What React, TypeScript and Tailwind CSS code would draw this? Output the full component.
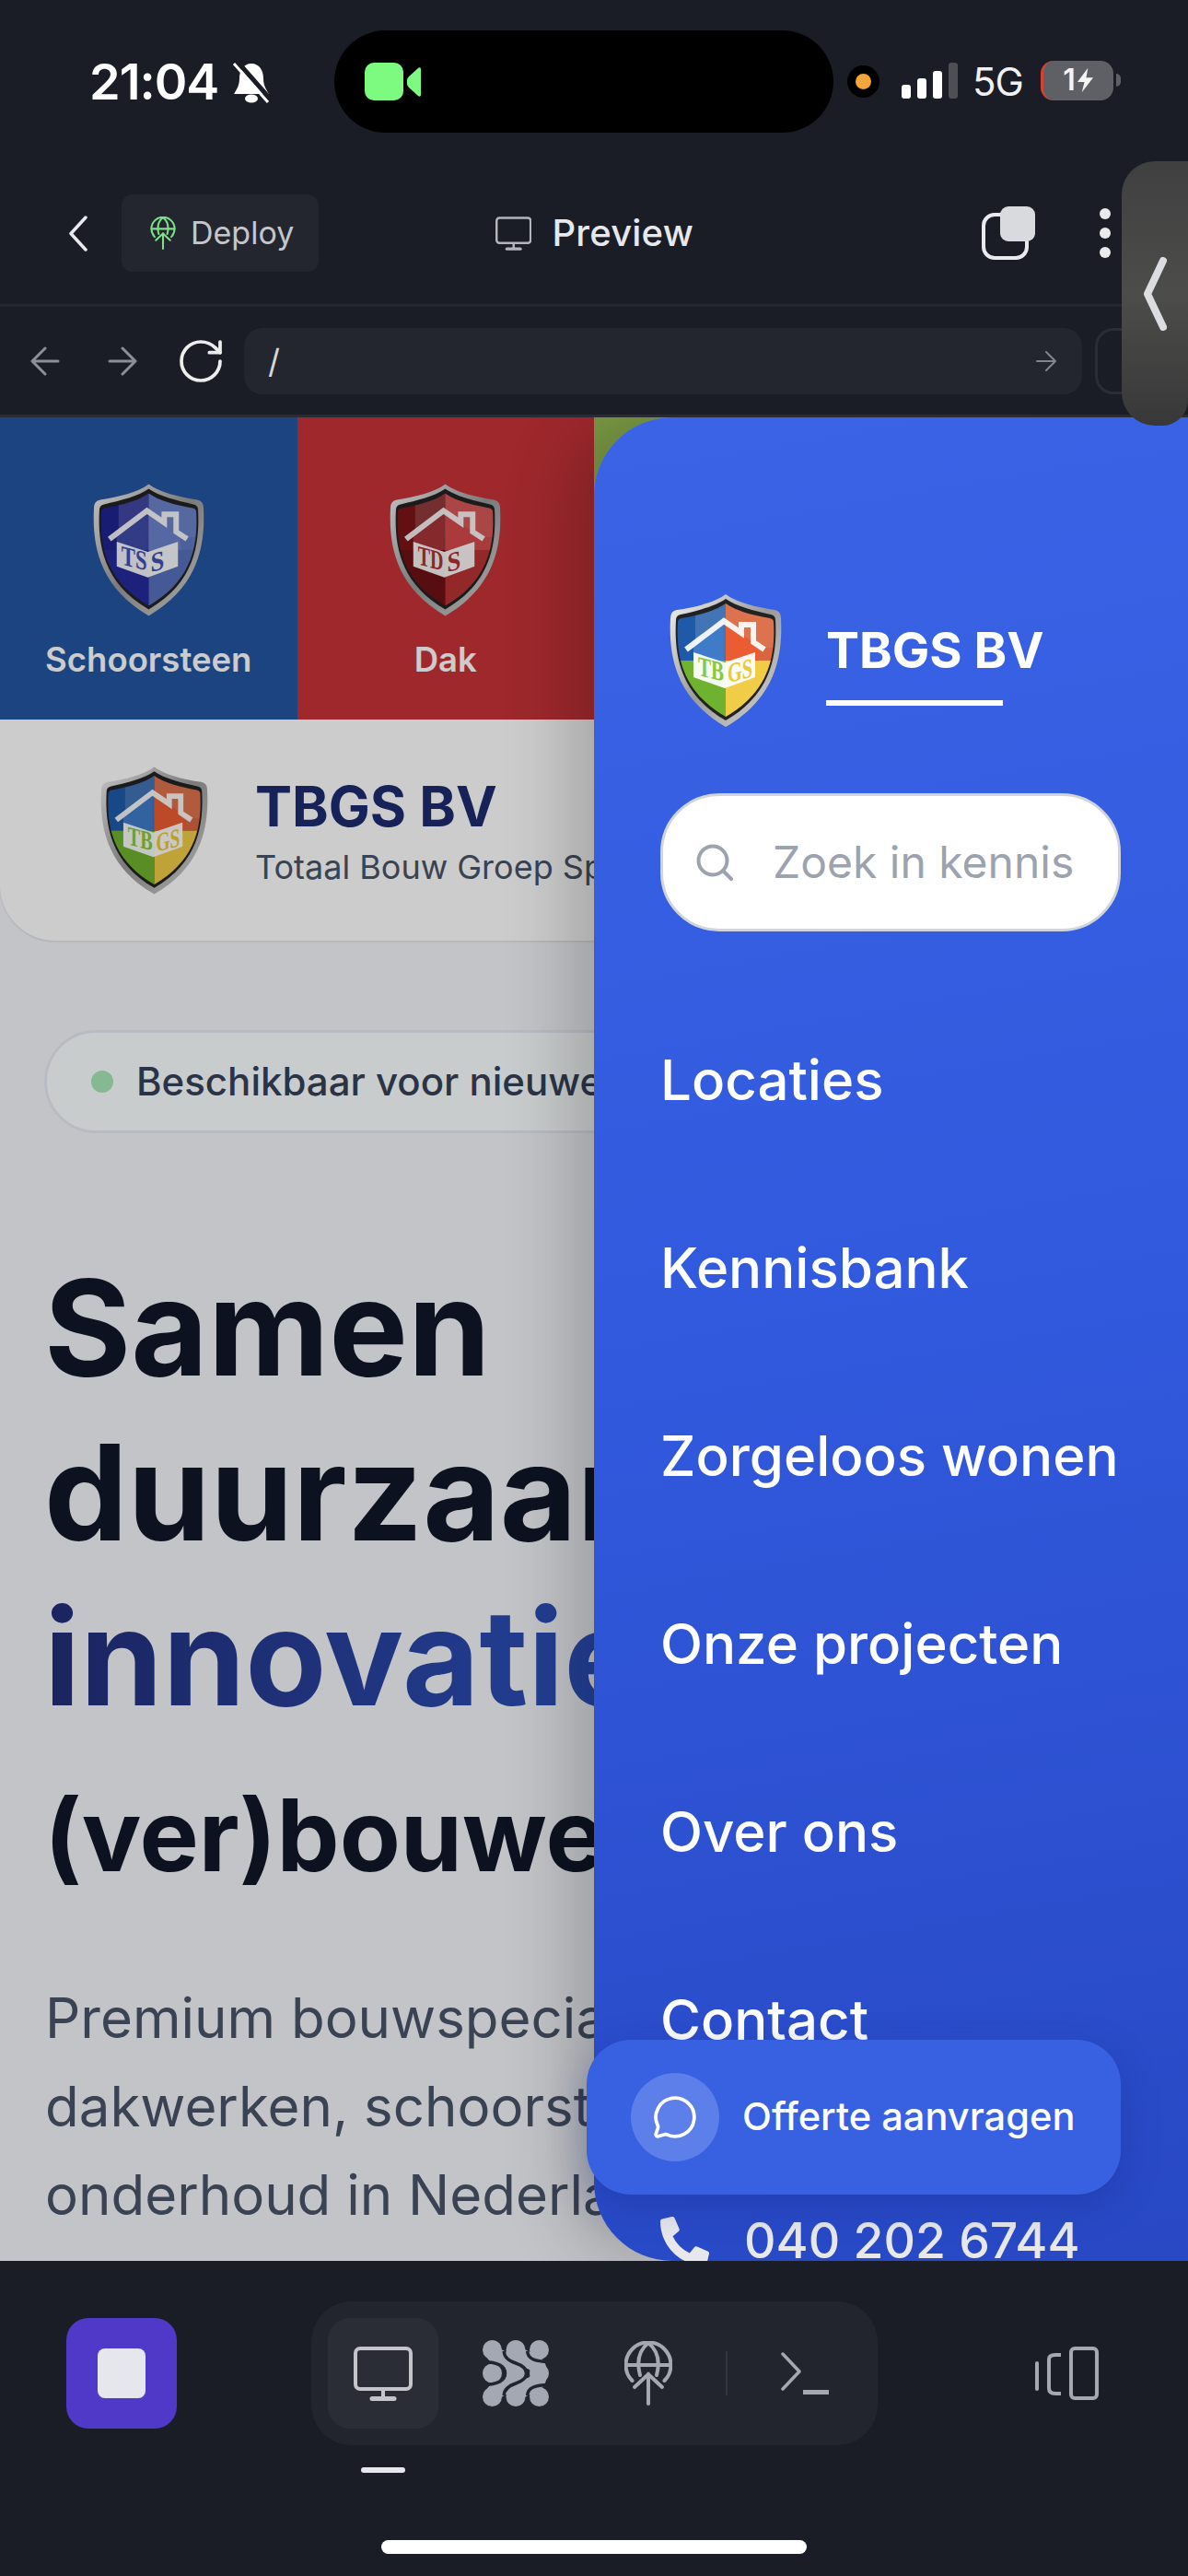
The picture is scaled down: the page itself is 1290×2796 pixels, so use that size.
import { MessageCircle, RotateCw } from 'lucide-react'
import { FaPhoneAlt } from 'react-icons/fa'

type ShieldProps = {
  id: string
  label: string
  tl: string
  tr: string
  bl: string
  br: string
  houseL: string
  houseR: string
  textL: string
  textR: string
  className?: string
}

const OUTER =
  'M61 0C49 9 28 14 8 17Q1 18 1 26C-1 66 6 112 61 144C116 112 123 66 121 26Q121 18 114 17C94 14 73 9 61 0Z'
const MID =
  'M61 5C50 13 30 18 12 22Q7 23 7 28C5 66 11 108 61 137C111 108 117 66 115 28Q115 23 110 22C92 18 72 13 61 5Z'
const INNER =
  'M61 10C50 18 31 23 13 26Q9 27 9 30C7 66 13 105 61 133C109 105 115 66 113 30Q113 27 109 26C91 23 72 18 61 10Z'

function Shield({ id, label, tl, tr, bl, br, houseL, houseR, textL, textR, className }: ShieldProps) {
  const left = label.slice(0, 2)
  const right = label.slice(2)
  return (
    <svg viewBox="0 0 122 144" className={className}>
      <defs>
        <linearGradient id={`${id}-rim`} x1="0" y1="0" x2="1" y2="1">
          <stop offset="0" stopColor="#f4f4f4" />
          <stop offset="0.5" stopColor="#9a9a9a" />
          <stop offset="1" stopColor="#d8d8d8" />
        </linearGradient>
        <clipPath id={`${id}-clip`}>
          <path d={INNER} />
        </clipPath>
      </defs>
      <path d={OUTER} fill={`url(#${id}-rim)`} />
      <path d={MID} fill="#222" />
      <g clipPath={`url(#${id}-clip)`}>
        <rect x="0" y="0" width="61" height="72" fill={tl} />
        <rect x="61" y="0" width="61" height="72" fill={tr} />
        <rect x="0" y="72" width="61" height="72" fill={bl} />
        <rect x="61" y="72" width="61" height="72" fill={br} />
        <rect x="28" y="0" width="33" height="72" fill="#fff" opacity="0.16" />
        <rect x="61" y="0" width="61" height="58" fill="#fff" opacity="0.08" />
        <path d="M59 30L26 56V72H59Z" fill={houseL} />
        <path d="M61 30L96 56V72H61Z" fill={houseR} />
      </g>
      <path d="M18 60L59 29L78 42V33H91V52L103 60" fill="none" stroke="#fff" strokeWidth="6" opacity="0.92" />
      <path d="M26 63L60 74L93 63V90L60 102L26 90Z" fill="#fff" opacity="0.94" />
      <g transform="skewY(14)">
        <text
          x="31"
          y="80"
          fontFamily="'Liberation Serif', serif"
          fontWeight="700"
          fontSize="30"
          fill={textL}
          textLength="28"
          lengthAdjust="spacingAndGlyphs"
        >
          {left}
        </text>
      </g>
      <g transform="translate(0 30) skewY(-14)">
        <text
          x="63"
          y="82"
          fontFamily="'Liberation Serif', serif"
          fontWeight="700"
          fontSize="30"
          fill={textR}
          textLength={right.length === 1 ? 15 : 27}
          lengthAdjust="spacingAndGlyphs"
        >
          {right}
        </text>
      </g>
    </svg>
  )
}

const TBGS = {
  label: 'TBGS',
  tl: '#1f5aa8',
  tr: '#d9663f',
  bl: '#6fb22f',
  br: '#f1cc47',
  houseL: '#3f7bc8',
  houseR: '#ec5c33',
  textL: '#86c93d',
  textR: '#e8c93a',
}

function GlobeUp({ className, color }: { className?: string; color: string }) {
  return (
    <svg viewBox="0 0 52 70" fill="none" stroke={color} strokeWidth="4" strokeLinecap="round" className={className}>
      <path d="M8.5 43A24.5 24.5 0 1 1 43.5 43" />
      <path d="M2 26H50" />
      <path d="M26 2C16 10 13 22 17 37" />
      <path d="M26 2C36 10 39 22 35 37" />
      <path d="M26 68V36" />
      <path d="M11 50L26 36L41 50" />
    </svg>
  )
}

function Monitor({ className, color }: { className?: string; color: string }) {
  return (
    <svg viewBox="0 0 64 59" fill="none" stroke={color} className={className}>
      <rect x="2" y="2" width="60" height="44" rx="5" strokeWidth="4" />
      <path d="M32 46V55" strokeWidth="4" />
      <path d="M20 56.5H44" strokeWidth="5" strokeLinecap="round" />
    </svg>
  )
}

function FlowIcon() {
  return (
    <svg viewBox="0 0 72 72" fill="#a4a8b2" className="w-[72px] h-[72px]">
      <circle cx="10.5" cy="10.5" r="10.5" />
      <circle cx="36" cy="10.5" r="10.5" />
      <circle cx="61.5" cy="10.5" r="10.5" />
      <circle cx="10.5" cy="36" r="10.5" />
      <circle cx="36" cy="36" r="10.5" />
      <circle cx="61.5" cy="36" r="10.5" />
      <circle cx="10.5" cy="61.5" r="10.5" />
      <circle cx="36" cy="61.5" r="10.5" />
      <circle cx="61.5" cy="61.5" r="10.5" />
      <g fill="none" stroke="#a4a8b2" strokeWidth="18">
        <path d="M10.5 10.5C16 26 35 17 35 36C35 55 16 46 10.5 61.5" />
        <path d="M36 10.5C41 26 61 17 61 36C61 55 41 46 36 61.5" />
      </g>
      {/* gaps between the blobs */}
      <g fill="none" stroke="#23252e" strokeWidth="3.5">
        <path d="M-2 23.5C16 23.5 24.5 28 24.5 36C24.5 44 16 48.5 -2 48.5" />
        <path d="M23.2 12C23.5 20 30 23 36 25C42 27 47.5 31 47.5 36C47.5 41 42 45 36 47C30 49 23.5 52 23.2 60" />
        <path d="M48.7 12C49 20 56 23.5 74 23.5" />
        <path d="M48.7 60C49 52 56 48.5 74 48.5" />
      </g>
    </svg>
  )
}

const MENU = ['Locaties', 'Kennisbank', 'Zorgeloos wonen', 'Onze projecten', 'Over ons', 'Contact']

export default function App() {
  return (
    <div className="relative w-[1290px] h-[2796px] overflow-hidden flex flex-col bg-[#1a1d25] [font-family:Inter,sans-serif]">
      {/* Status bar */}
      <div className="h-[176px] shrink-0 pt-[33px] pl-[97px]">
        <div className="flex items-center h-[111px]">
          <span className="w-[150px] text-[54px] leading-none font-semibold text-white tracking-[-1px]">21:04</span>
          <svg viewBox="0 0 42 46" className="w-[42px] h-[46px] ml-[5px] mr-[69px]">
            <path d="M21 3C12 3 8 11 8 19C8 27 5 31 2 36H40C37 31 34 27 34 19C34 11 30 3 21 3Z" fill="#fff" />
            <ellipse cx="21" cy="41" rx="7" ry="4.5" fill="#fff" />
            <path d="M5 0L41 41" stroke="#1a1d25" strokeWidth="5" />
            <path d="M2 3L39 45" stroke="#fff" strokeWidth="3" />
          </svg>
          <div className="w-[542px] h-[111px] rounded-[56px] bg-black flex items-center pl-[33px] gap-[4px]">
            <div className="w-[42px] h-[41px] rounded-[10px] bg-[#7dfb80]" />
            <svg viewBox="0 0 15 32" className="w-[15px] h-[32px]">
              <path d="M15 2V30C15 32 13 32 12 31L2 22Q0 20 0 18V14Q0 12 2 10L12 1C13 0 15 0 15 2Z" fill="#7dfb80" />
            </svg>
          </div>
          <div className="ml-[15px] w-[35px] h-[35px] rounded-full bg-black flex items-center justify-center">
            <div className="w-[17px] h-[17px] rounded-full bg-[#f2a63b]" />
          </div>
          <div className="ml-[24px] flex items-end gap-[7px] h-[39px] mt-[-2px]">
            <div className="w-[10px] h-[15px] rounded-[3px] bg-white" />
            <div className="w-[10px] h-[22px] rounded-[3px] bg-white" />
            <div className="w-[10px] h-[30px] rounded-[3px] bg-white" />
            <div className="w-[10px] h-[39px] rounded-[3px] bg-[#4d4f55]" />
          </div>
          <span className="ml-[16px] w-[74px] text-[42px] leading-none text-[#f1f1f3] tracking-[-1px]">5G</span>
          <div className="relative w-[79px] h-[43px] rounded-[14px] bg-[#5f6066] border-l-[3px] border-[#d84031] flex items-center justify-center gap-[1px] mt-[-3px]">
            <span className="text-[32px] leading-none font-semibold text-[#f4f4f5]">1</span>
            <svg viewBox="0 0 20 28" className="w-[19px] h-[28px]">
              <path d="M13 0L1 16H9L6 28L19 11H11Z" fill="#f4f4f5" />
            </svg>
          </div>
          <div className="ml-[3px] w-[5px] h-[14px] rounded-r-full bg-[#5f6066] mt-[-3px]" />
        </div>
      </div>

      {/* Header */}
      <div className="h-[157px] shrink-0 border-b-[3px] border-[#25272e] flex items-center pl-[74px]">
        <svg viewBox="0 0 21 39" fill="none" stroke="#e9eaee" strokeWidth="3.5" strokeLinecap="round" strokeLinejoin="round" className="w-[21px] h-[39px]">
          <path d="M19 2L3 19.5L19 37" />
        </svg>
        <div className="ml-[37px] w-[214px] h-[84px] rounded-[12px] bg-[#23262e] flex items-center pl-[31px] gap-[16px]">
          <GlobeUp className="w-[28px] h-[36px]" color="#7fe08a" />
          <span className="text-[34px] leading-none text-[#c4c6cc]">Deploy</span>
        </div>
        <div className="ml-[192px] w-[215px] flex items-center gap-[22px]">
          <Monitor className="w-[42px] h-[39px]" color="#b3b5bb" />
          <span className="text-[40px] leading-none font-medium tracking-[0.2px] text-[#e7e8ec]">Preview</span>
        </div>
        <div className="relative ml-[313px] w-[58px] h-[58px]">
          <div className="absolute left-0 bottom-0 w-[51px] h-[51px] rounded-[14px] border-[4px] border-[#e9eaee]" />
          <div className="absolute right-0 top-0 w-[38px] h-[38px] rounded-[9px] bg-[#d9dade]" />
        </div>
        <div className="ml-[70px] flex flex-col gap-[9px]">
          <div className="w-[12px] h-[12px] rounded-full bg-[#e9eaee]" />
          <div className="w-[12px] h-[12px] rounded-full bg-[#e9eaee]" />
          <div className="w-[12px] h-[12px] rounded-full bg-[#e9eaee]" />
        </div>
      </div>

      {/* Browser bar */}
      <div className="h-[120px] shrink-0 border-b-[3px] border-[#2a2c33] flex items-center pl-[33px]">
        <svg viewBox="0 0 32 32" fill="none" stroke="#8d8f96" strokeWidth="3" strokeLinecap="round" strokeLinejoin="round" className="w-[32px] h-[32px] shrink-0">
          <path d="M30 16H3M16 2L2 16L16 30" />
        </svg>
        <svg viewBox="0 0 32 32" fill="none" stroke="#8d8f96" strokeWidth="3" strokeLinecap="round" strokeLinejoin="round" className="w-[32px] h-[32px] ml-[52px] shrink-0">
          <path d="M2 16H29M16 2L30 16L16 30" />
        </svg>
        <RotateCw size={56} strokeWidth={1.6} className="ml-[41px] shrink-0 text-[#eceded]" />
        <div className="ml-[19px] w-[910px] h-[72px] shrink-0 rounded-[20px] bg-[#23262e] flex items-center justify-between pl-[26px] pr-[27px]">
          <span className="text-[36px] leading-none text-[#d5d6da]">/</span>
          <svg viewBox="0 0 24 24" fill="none" stroke="#83858c" strokeWidth="2" strokeLinecap="round" strokeLinejoin="round" className="w-[24px] h-[24px]">
            <path d="M2 12H22M12 2L22 12L12 22" />
          </svg>
        </div>
        <div className="ml-[14px] w-[120px] h-[72px] shrink-0 rounded-[20px] border-[3px] border-[#2a2d35]" />
      </div>

      {/* Page + drawer */}
      <div className="relative flex-1 min-h-0 overflow-hidden bg-[#f4f6fb]">
        <div className="grid grid-cols-4 h-[328px]">
          <div className="bg-[#2256a1] flex flex-col items-center pt-[72px]">
            <Shield id="tss" label="TSS" tl="#1f2390" tr="#5f78c4" bl="#252a9c" br="#5870bd" houseL="#3e4aa8" houseR="#6b82cc" textL="#4050b0" textR="#4050b0" className="w-[121px] h-[144px]" />
            <span className="mt-[25px] text-[36.5px] leading-[44px] font-semibold text-white">Schoorsteen</span>
          </div>
          <div className="bg-[#c63238] flex flex-col items-center pt-[72px]">
            <Shield id="tds" label="TDS" tl="#7c1517" tr="#d34a4a" bl="#6f1214" br="#b83234" houseL="#a73437" houseR="#d5494a" textL="#b23034" textR="#b23034" className="w-[121px] h-[144px]" />
            <span className="mt-[25px] text-[36.5px] leading-[44px] font-semibold text-white">Dak</span>
          </div>
          <div className="bg-[#9ac056]" />
          <div className="bg-[#d9a441]" />
        </div>

        <div className="h-[240px] bg-white rounded-bl-[60px] rounded-br-[60px] shadow-sm flex items-center pl-[109px] gap-[51px]">
          <Shield id="hdr" {...TBGS} className="w-[117px] h-[141px] shrink-0" />
          <div className="whitespace-nowrap">
            <div className="text-[60px] leading-[72px] font-bold text-[#1d2c6e]">TBGS BV</div>
            <div className="mt-[8px] text-[36px] leading-[44px] text-[#495467]">Totaal Bouw Groep Specialist</div>
          </div>
        </div>

        <div className="ml-[48px] mt-[97px] w-[900px] h-[112px] rounded-full border-[3px] border-[#e7eaf4] bg-[#fcffff] flex items-center pl-[48px] gap-[25px]">
          <div className="w-[24px] h-[24px] rounded-full bg-[#a8e6b7]" />
          <span className="text-[42px] leading-none font-medium text-[#364158] whitespace-nowrap">Beschikbaar voor nieuwe projecten</span>
        </div>

        <div className="pl-[48px] mt-[121px] whitespace-nowrap">
          <div className="text-[144px] leading-[179px] font-bold text-[#0f1728]">Samen</div>
          <div className="text-[144px] leading-[179px] font-bold text-[#0f1728]">duurzaam</div>
          <div className="text-[144px] leading-[179px] font-bold w-fit bg-linear-to-r from-[#212e78] to-[#2e54c3] bg-clip-text text-transparent">innovatie</div>
          <div className="text-[108px] leading-[208px] font-bold text-[#0f1728]">(ver)bouwen</div>
        </div>

        <div className="pl-[49px] mt-[46px] text-[60px] leading-[96px] text-[#495469] whitespace-nowrap">
          <div>Premium bouwspecialist voor</div>
          <div>dakwerken, schoorstenen en</div>
          <div>onderhoud in Nederland</div>
        </div>

        {/* dim behind the drawer */}
        <div className="absolute inset-0 bg-black/20" />

        <div className="absolute left-[645px] right-0 top-0 bottom-0 overflow-hidden rounded-l-[85px] bg-linear-170 from-[#3a63e6] via-[#3159dd] to-[#2848c4] shadow-[-30px_0_70px_rgba(0,0,0,0.18)]">
          <div className="pt-[192px] pl-[82px] flex items-start gap-[49px]">
            <Shield id="nav" {...TBGS} className="w-[122px] h-[144px] shrink-0" />
            <div className="pt-[29px]">
              <div className="ml-[-1px] text-[54px] leading-[64px] font-bold text-white">TBGS BV</div>
              <div className="mt-[22px] ml-[-1px] w-[192px] h-[6px] bg-white" />
            </div>
          </div>
          <div className="ml-[72px] mt-[72px] w-[500px] h-[150px] rounded-[64px] bg-white border-[3px] border-[#d1d5db] flex items-center pl-[36px] gap-[43px]">
            <svg viewBox="0 0 40 40" fill="none" stroke="#9ca3af" strokeWidth="4" strokeLinecap="round" className="w-[40px] h-[40px]">
              <circle cx="18" cy="18" r="15.5" />
              <path d="M30 30L38 38" />
            </svg>
            <span className="text-[48px] leading-none text-[#9ca3af] whitespace-nowrap">Zoek in kennis</span>
          </div>
          <div className="mt-[59px] pl-[72px]">
            {MENU.map((item) => (
              <div key={item} className="h-[204px] flex items-center text-[60px] leading-none font-medium text-white whitespace-nowrap">
                {item}
              </div>
            ))}
          </div>
          <div className="mt-[108px] pl-[72px] flex items-center gap-[38px] text-[#e8e8ec]">
            <FaPhoneAlt size={53} />
            <span className="text-[53.5px] leading-[60px] font-medium">040 202 6744</span>
          </div>
        </div>

        <div className="absolute left-[637px] top-[1761px] w-[580px] h-[168px] rounded-[48px] bg-[#3861e2] shadow-[0_12px_40px_rgba(20,40,130,0.3)] flex items-center pl-[48px] gap-[25px]">
          <div className="w-[96px] h-[96px] rounded-full bg-[#5d7fe9] flex items-center justify-center">
            <MessageCircle size={50} strokeWidth={1.8} className="text-white" />
          </div>
          <span className="text-[41.6px] leading-none font-medium text-white whitespace-nowrap">Offerte aanvragen</span>
        </div>
      </div>

      {/* Bottom bar */}
      <div className="h-[342px] shrink-0 pt-[44px]">
        <div className="flex items-center pl-[72px]">
          <div className="w-[120px] h-[120px] rounded-[24px] bg-[#5038c8] flex items-center justify-center">
            <div className="w-[52px] h-[54px] rounded-[8px] bg-[#e6e7ec]" />
          </div>
          <div className="ml-[146px] w-[615px] h-[156px] rounded-[44px] bg-[#23252e] flex items-center pl-[18px] gap-[24px]">
            <div className="w-[120px] h-[120px] rounded-[24px] bg-[#2b2d36] flex items-center justify-center">
              <Monitor className="w-[64px] h-[59px]" color="#c3c5cb" />
            </div>
            <div className="w-[120px] h-[120px] flex items-center justify-center">
              <FlowIcon />
            </div>
            <div className="w-[120px] h-[120px] flex items-center justify-center">
              <GlobeUp className="w-[52px] h-[70px]" color="#a4a8b2" />
            </div>
            <div className="w-[2px] h-[48px] bg-[#33363f]" />
            <div className="w-[120px] h-[120px] flex items-center justify-center">
              <svg viewBox="0 0 52 46" fill="none" stroke="#a4a8b2" className="w-[52px] h-[46px]">
                <path d="M2 2L20 21L2 40" strokeWidth="3.5" strokeLinecap="round" strokeLinejoin="round" />
                <path d="M24 43.5H52" strokeWidth="5" />
              </svg>
            </div>
          </div>
          <svg viewBox="0 0 69 58" fill="none" stroke="#a4a8b2" strokeWidth="4" className="ml-[171px] w-[69px] h-[58px]">
            <rect x="39" y="2" width="28" height="54" rx="4" />
            <path d="M28 9H22Q15 9 15 14V45Q15 51 22 51H28" />
            <path d="M2 18V46" strokeLinecap="round" />
          </svg>
        </div>
        <div className="ml-[392px] mt-[24px] w-[48px] h-[6px] rounded-full bg-[#e6e7ec]" />
        <div className="mx-auto mt-[73px] w-[462px] h-[15px] rounded-full bg-white" />
      </div>

      {/* Side handle */}
      <div className="absolute left-[1218px] top-[175px] w-[72px] h-[287px] rounded-l-[36px] rounded-br-[28px] bg-linear-to-b from-[#3f403f] via-[#4c4c4b] to-[#383838] flex items-center justify-center">
        <svg viewBox="0 0 26 80" fill="none" stroke="#dcdde0" strokeWidth="8" strokeLinecap="round" strokeLinejoin="round" className="w-[26px] h-[80px]">
          <path d="M22 4L5 40L22 76" />
        </svg>
      </div>
    </div>
  )
}
